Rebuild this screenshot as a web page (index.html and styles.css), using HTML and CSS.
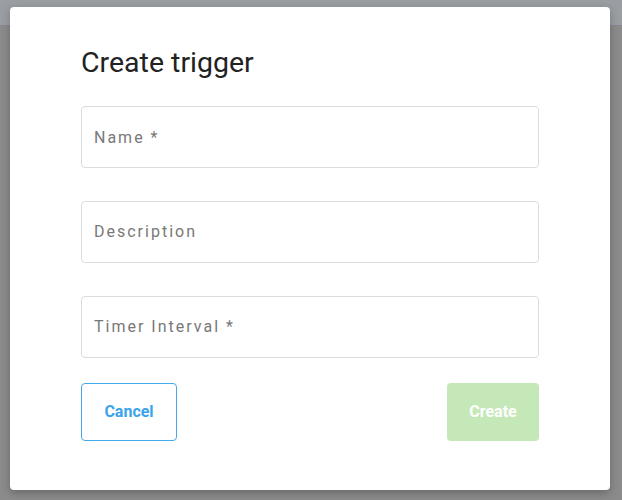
FILE: index.html
```html
<!DOCTYPE html>
<html>
<head>
<meta charset="utf-8">
<link rel="stylesheet" href="styles.css">
</head>
<body>
<div class="backdrop">
  <div class="topbar"></div>
  <div class="dialog">
    <h1 class="title">Create trigger</h1>
    <div class="fields">
      <div class="field"><span class="label">Name *</span></div>
      <div class="field"><span class="label">Description</span></div>
      <div class="field"><span class="label">Timer Interval *</span></div>
    </div>
    <div class="actions">
      <button class="btn btn-cancel">Cancel</button>
      <button class="btn btn-create">Create</button>
    </div>
  </div>
</div>
</body>
</html>
```
FILE: styles.css
```css
html, body {
  margin: 0;
  padding: 0;
  width: 622px;
  height: 500px;
  overflow: hidden;
  font-family: Roboto, "Liberation Sans", sans-serif;
}
.backdrop {
  position: relative;
  width: 622px;
  height: 500px;
  background: #8b8b8b;
}
.topbar {
  height: 25px;
  background: #9a9ea2;
  border-bottom: 1px solid #8a8595;
}
.dialog {
  position: absolute;
  left: 10px;
  top: 7px;
  width: 600px;
  height: 483px;
  box-sizing: border-box;
  background: #fff;
  border-radius: 4px;
  box-shadow: 0 3px 8px rgba(0,0,0,0.25);
  padding: 40px 71px 0 71px;
  display: flex;
  flex-direction: column;
}
.title {
  margin: 0;
  font-size: 28.5px;
  font-weight: 400;
  color: #222;
  line-height: 32px;
  height: 32px;
}
.fields {
  margin-top: 27px;
  display: flex;
  flex-direction: column;
  gap: 32.4px;
}
.field {
  height: 62.4px;
  box-sizing: border-box;
  border: 1px solid #dcdcdc;
  border-radius: 4px;
  display: flex;
  align-items: center;
  padding: 0 12px;
}
.label {
  font-size: 16px;
  letter-spacing: 2px;
  color: #787878;
}
.actions {
  margin-top: 25px;
  display: flex;
  justify-content: space-between;
}
.btn {
  font-family: Roboto, "Liberation Sans", sans-serif;
  font-size: 16px;
  font-weight: 700;
  height: 58px;
  border-radius: 4px;
  box-sizing: border-box;
  cursor: pointer;
}
.btn-cancel {
  width: 96px;
  background: #fff;
  border: 1px solid #43a9ea;
  color: #3aa3eb;
}
.btn-create {
  width: 92px;
  background: #c5e8b8;
  border: none;
  color: #fff;
}
```
